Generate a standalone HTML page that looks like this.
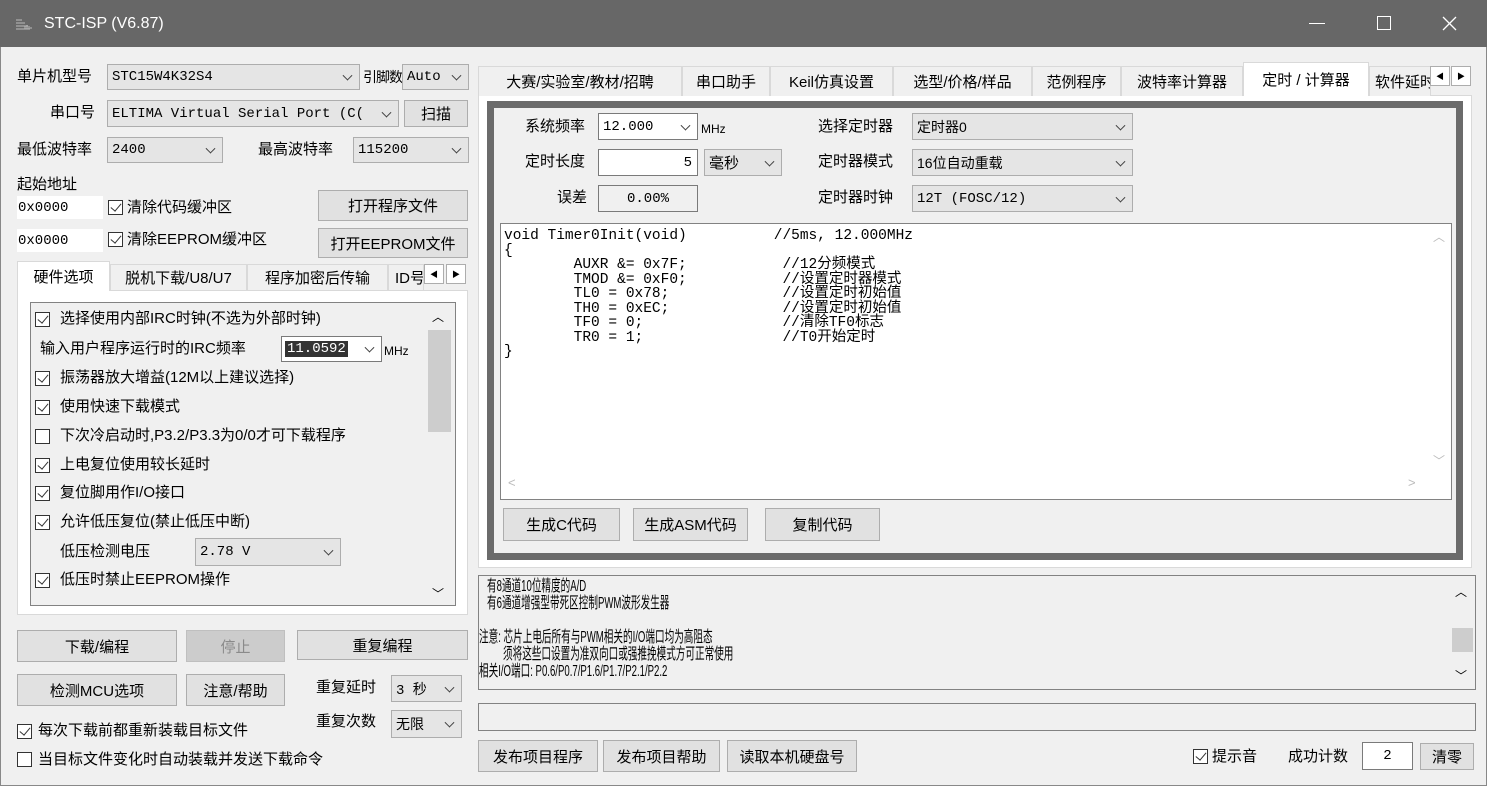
<!DOCTYPE html>
<html><head><meta charset="utf-8"><style>
*{box-sizing:border-box;margin:0;padding:0}
body{width:1487px;height:786px;overflow:hidden;background:#f0f0f0;font-family:"Liberation Sans","Noto Sans CJK SC",sans-serif;font-size:15px;color:#000;position:relative}
.a{position:absolute;white-space:nowrap}
.t{position:absolute;white-space:nowrap;line-height:18px}
.cb{position:absolute;background:#e5e5e5;border:1px solid #adadad;font-size:14px;padding-left:4px;display:flex;align-items:center;font-family:"Liberation Mono","Noto Sans CJK SC",monospace;white-space:nowrap;overflow:hidden}
.cb.w{background:#fff;border-color:#7a7a7a}
.cb:after{content:"";position:absolute;right:8px;top:50%;width:6px;height:6px;border-right:1px solid #444;border-bottom:1px solid #444;transform:translateY(-70%) rotate(45deg)}
.in{position:absolute;background:#fff;border:1px solid #c8c8c8;font-size:14px;display:flex;align-items:center;font-family:"Liberation Mono","Noto Sans CJK SC",monospace}
.bt{position:absolute;background:#e1e1e1;border:1px solid #adadad;display:flex;align-items:center;justify-content:center;font-size:15px;white-space:nowrap}
.ck{position:absolute;width:15px;height:15px;border:1px solid #333;background:#fff}
.ck.on:after{content:"";position:absolute;left:4px;top:0px;width:5px;height:9px;border-right:1.5px solid #333;border-bottom:1.5px solid #333;transform:rotate(40deg)}
.tab{position:absolute;background:#f0f0f0;border:1px solid #d9d9d9;border-bottom:none;display:flex;align-items:center;justify-content:center;font-size:15px;white-space:nowrap;overflow:hidden}
.arr{position:absolute;width:20px;height:20px;background:#fff;border:1px solid #adadad;font-size:8px;display:flex;align-items:center;justify-content:center}
.code{position:absolute;font-family:"Liberation Mono","Noto Sans CJK SC",monospace;font-size:14.5px;line-height:14.5px;white-space:pre}
.info{position:absolute;font-family:"Liberation Sans","Noto Sans CJK SC",sans-serif;font-size:16px;line-height:17px;white-space:pre;transform:scaleX(0.6);transform-origin:left top}
</style></head><body>
<!-- title -->
<div class="a" style="left:0;top:0;width:1487px;height:47px;background:#676767"></div>
<div class="a" style="left:15px;top:17px;width:18px;height:14px">
<svg width="18" height="14"><g stroke="#bbb" fill="none"><path d="M1 3h6M1 6h9M1 9h12M1 12h14"/><path d="M10 12V9M12 12V8M14 12V9M16 12V10"/></g></svg></div>
<div class="t" style="left:44px;top:15px;color:#fff;font-size:16px">STC-ISP (V6.87)</div>
<div class="a" style="left:1309px;top:23px;width:16px;height:1px;background:#fff"></div>
<div class="a" style="left:1377px;top:16px;width:14px;height:14px;border:1px solid #fff"></div>
<svg class="a" style="left:1442px;top:16px" width="15" height="15"><path d="M1 1L14 14M14 1L1 14" stroke="#fff" stroke-width="1.3"/></svg>
<div class="a" style="left:0;top:47px;width:1px;height:739px;background:#888"></div>
<div class="a" style="left:1486px;top:47px;width:1px;height:739px;background:#888"></div>
<div class="a" style="left:0;top:785px;width:1487px;height:1px;background:#888"></div>

<!-- left top -->
<div class="t" style="left:17px;top:68px">单片机型号</div>
<div class="cb" style="left:107px;top:64px;width:253px;height:26px">STC15W4K32S4</div>
<div class="t" style="left:363px;top:68px;font-size:14px;letter-spacing:-1px">引脚数</div>
<div class="cb" style="left:402px;top:64px;width:67px;height:26px">Auto</div>
<div class="t" style="left:50px;top:104px">串口号</div>
<div class="cb" style="left:107px;top:100px;width:292px;height:27px">ELTIMA Virtual Serial Port (C(</div>
<div class="bt" style="left:404px;top:100px;width:64px;height:27px">扫描</div>
<div class="t" style="left:17px;top:141px">最低波特率</div>
<div class="cb" style="left:107px;top:137px;width:116px;height:26px">2400</div>
<div class="t" style="left:258px;top:141px">最高波特率</div>
<div class="cb" style="left:353px;top:137px;width:116px;height:26px">115200</div>
<div class="t" style="left:17px;top:176px">起始地址</div>
<div class="in" style="left:17px;top:196px;width:86px;height:23px;border-color:#fff">0x0000</div>
<div class="ck on" style="left:108px;top:200px"></div>
<div class="t" style="left:127px;top:199px">清除代码缓冲区</div>
<div class="bt" style="left:318px;top:190px;width:150px;height:31px">打开程序文件</div>
<div class="in" style="left:17px;top:229px;width:86px;height:23px;border-color:#fff">0x0000</div>
<div class="ck on" style="left:108px;top:232px"></div>
<div class="t" style="left:127px;top:231px">清除EEPROM缓冲区</div>
<div class="bt" style="left:318px;top:228px;width:150px;height:30px">打开EEPROM文件</div>

<!-- left tabs -->
<div class="a" style="left:17px;top:290px;width:451px;height:325px;background:#fff;border:1px solid #d9d9d9"></div>
<div class="tab" style="left:17px;top:261px;width:93px;height:30px;background:#fff;border-color:#d9d9d9">硬件选项</div>
<div class="tab" style="left:110px;top:264px;width:137px;height:26px">脱机下载/U8/U7</div>
<div class="tab" style="left:247px;top:264px;width:141px;height:26px">程序加密后传输</div>
<div class="tab" style="left:388px;top:264px;width:36px;height:26px;justify-content:flex-start;padding-left:6px">ID号</div>
<div class="arr" style="left:424px;top:264px">◀</div>
<div class="arr" style="left:446px;top:264px">▶</div>
<div class="a" style="left:30px;top:302px;width:426px;height:304px;background:#f0f0f0;border:1px solid #828282"></div>
<div class="a" style="left:427px;top:303px;width:28px;height:302px;background:#f0f0f0"></div>
<div class="a" style="left:428px;top:330px;width:23px;height:102px;background:#cdcdcd"></div>
<div class="t" style="left:432px;top:308px;font-size:12px">︿</div>
<div class="t" style="left:432px;top:585px;font-size:12px">﹀</div>
<div class="ck on" style="left:35px;top:312px"></div><div class="t" style="left:60px;top:310px">选择使用内部IRC时钟(不选为外部时钟)</div>
<div class="t" style="left:40px;top:340px">输入用户程序运行时的IRC频率</div>
<div class="cb w" style="left:281px;top:336px;width:101px;height:26px;padding-left:3px"><span style="background:#333;color:#fff;padding:0 2px">11.0592</span></div>
<div class="t" style="left:384px;top:342px;font-size:12px">MHz</div>
<div class="ck on" style="left:35px;top:371px"></div><div class="t" style="left:60px;top:369px">振荡器放大增益(12M以上建议选择)</div>
<div class="ck on" style="left:35px;top:400px"></div><div class="t" style="left:60px;top:398px">使用快速下载模式</div>
<div class="ck" style="left:35px;top:429px"></div><div class="t" style="left:60px;top:427px">下次冷启动时,P3.2/P3.3为0/0才可下载程序</div>
<div class="ck on" style="left:35px;top:458px"></div><div class="t" style="left:60px;top:456px">上电复位使用较长延时</div>
<div class="ck on" style="left:35px;top:486px"></div><div class="t" style="left:60px;top:484px">复位脚用作I/O接口</div>
<div class="ck on" style="left:35px;top:515px"></div><div class="t" style="left:60px;top:513px">允许低压复位(禁止低压中断)</div>
<div class="t" style="left:60px;top:543px">低压检测电压</div>
<div class="cb" style="left:195px;top:538px;width:146px;height:28px">2.78 V</div>
<div class="ck on" style="left:35px;top:573px"></div><div class="t" style="left:60px;top:571px">低压时禁止EEPROM操作</div>

<!-- left bottom -->
<div class="bt" style="left:17px;top:630px;width:160px;height:32px">下载/编程</div>
<div class="bt" style="left:186px;top:630px;width:99px;height:32px;background:#cccccc;border-color:#bfbfbf;color:#8a8a8a">停止</div>
<div class="bt" style="left:297px;top:630px;width:171px;height:30px">重复编程</div>
<div class="bt" style="left:17px;top:674px;width:160px;height:32px">检测MCU选项</div>
<div class="bt" style="left:186px;top:674px;width:99px;height:32px">注意/帮助</div>
<div class="t" style="left:316px;top:679px">重复延时</div>
<div class="cb" style="left:391px;top:675px;width:71px;height:27px">3 秒</div>
<div class="t" style="left:316px;top:713px">重复次数</div>
<div class="cb" style="left:391px;top:710px;width:71px;height:28px">无限</div>
<div class="ck on" style="left:17px;top:724px"></div><div class="t" style="left:38px;top:722px">每次下载前都重新装载目标文件</div>
<div class="ck" style="left:17px;top:752px"></div><div class="t" style="left:38px;top:751px">当目标文件变化时自动装载并发送下载命令</div>

<!-- right tabs -->
<div class="a" style="left:478px;top:95px;width:994px;height:473px;background:#fff;border:1px solid #d9d9d9"></div>
<div class="tab" style="left:478px;top:66px;width:204px;height:30px">大赛/实验室/教材/招聘</div>
<div class="tab" style="left:682px;top:66px;width:88px;height:30px">串口助手</div>
<div class="tab" style="left:770px;top:66px;width:123px;height:30px">Keil仿真设置</div>
<div class="tab" style="left:893px;top:66px;width:139px;height:30px">选型/价格/样品</div>
<div class="tab" style="left:1032px;top:66px;width:89px;height:30px">范例程序</div>
<div class="tab" style="left:1121px;top:66px;width:122px;height:30px">波特率计算器</div>
<div class="tab" style="left:1243px;top:62px;width:126px;height:34px;background:#fff">定时 / 计算器</div>
<div class="tab" style="left:1369px;top:66px;width:62px;height:30px;justify-content:flex-start;padding-left:5px">软件延时</div>
<div class="arr" style="left:1430px;top:66px">◀</div>
<div class="arr" style="left:1451px;top:66px">▶</div>
<div class="a" style="left:487px;top:101px;width:976px;height:459px;background:#f0f0f0;border:7px solid #6b6b6b"></div>
<div class="t" style="left:525px;top:118px">系统频率</div>
<div class="cb w" style="left:598px;top:113px;width:100px;height:27px">12.000</div>
<div class="t" style="left:701px;top:120px;font-size:12px">MHz</div>
<div class="t" style="left:525px;top:153px">定时长度</div>
<div class="in" style="left:598px;top:149px;width:100px;height:27px;border-color:#7a7a7a;justify-content:flex-end;padding-right:5px">5</div>
<div class="cb" style="left:704px;top:149px;width:78px;height:27px;font-family:'Liberation Sans','Noto Sans CJK SC',sans-serif;font-size:15px">毫秒</div>
<div class="t" style="left:557px;top:189px">误差</div>
<div class="in" style="left:598px;top:185px;width:100px;height:27px;background:#f0f0f0;border-color:#7a7a7a;justify-content:center">0.00%</div>
<div class="t" style="left:818px;top:118px">选择定时器</div>
<div class="cb" style="left:912px;top:113px;width:221px;height:27px;font-family:'Liberation Sans','Noto Sans CJK SC',sans-serif">定时器0</div>
<div class="t" style="left:818px;top:153px">定时器模式</div>
<div class="cb" style="left:912px;top:149px;width:221px;height:27px;font-family:'Liberation Sans','Noto Sans CJK SC',sans-serif">16位自动重载</div>
<div class="t" style="left:818px;top:189px">定时器时钟</div>
<div class="cb" style="left:912px;top:185px;width:221px;height:27px">12T (FOSC/12)</div>
<div class="a" style="left:500px;top:223px;width:952px;height:277px;background:#fff;border:1px solid #828282"></div>
<div class="code" style="left:504px;top:229px">void Timer0Init(void)          //5ms, 12.000MHz
{
        AUXR &amp;= 0x7F;           //12分频模式
        TMOD &amp;= 0xF0;           //设置定时器模式
        TL0 = 0x78;             //设置定时初始值
        TH0 = 0xEC;             //设置定时初始值
        TF0 = 0;                //清除TF0标志
        TR0 = 1;                //T0开始定时
}</div>
<div class="t" style="left:1433px;top:228px;font-size:12px;color:#bbb">︿</div>
<div class="t" style="left:1433px;top:452px;font-size:12px;color:#bbb">﹀</div>
<div class="t" style="left:508px;top:474px;font-size:13px;color:#bbb">&lt;</div>
<div class="t" style="left:1408px;top:474px;font-size:13px;color:#bbb">&gt;</div>
<div class="bt" style="left:503px;top:508px;width:117px;height:33px">生成C代码</div>
<div class="bt" style="left:633px;top:508px;width:115px;height:33px">生成ASM代码</div>
<div class="bt" style="left:765px;top:508px;width:115px;height:33px">复制代码</div>

<!-- info -->
<div class="a" style="left:478px;top:575px;width:998px;height:115px;background:#f0f0f0;border:1px solid #828282"></div>
<div class="a" style="left:1450px;top:576px;width:25px;height:113px;background:#f0f0f0"></div>
<div class="a" style="left:1452px;top:628px;width:21px;height:24px;background:#cdcdcd"></div>
<div class="t" style="left:1455px;top:583px;font-size:12px">︿</div>
<div class="t" style="left:1455px;top:667px;font-size:12px">﹀</div>
<div class="info" style="left:479px;top:578px">   有8通道10位精度的A/D
   有6通道增强型带死区控制PWM波形发生器

注意: 芯片上电后所有与PWM相关的I/O端口均为高阻态
         须将这些口设置为准双向口或强推挽模式方可正常使用
相关I/O端口: P0.6/P0.7/P1.6/P1.7/P2.1/P2.2</div>
<div class="a" style="left:478px;top:703px;width:998px;height:28px;border:1px solid #828282"></div>
<div class="bt" style="left:478px;top:740px;width:120px;height:32px">发布项目程序</div>
<div class="bt" style="left:603px;top:740px;width:117px;height:32px">发布项目帮助</div>
<div class="bt" style="left:727px;top:740px;width:130px;height:32px">读取本机硬盘号</div>
<div class="ck on" style="left:1193px;top:749px"></div>
<div class="t" style="left:1212px;top:748px">提示音</div>
<div class="t" style="left:1288px;top:748px">成功计数</div>
<div class="in" style="left:1362px;top:742px;width:51px;height:28px;border-color:#7a7a7a;justify-content:center">2</div>
<div class="bt" style="left:1420px;top:743px;width:54px;height:27px">清零</div>
</body></html>
